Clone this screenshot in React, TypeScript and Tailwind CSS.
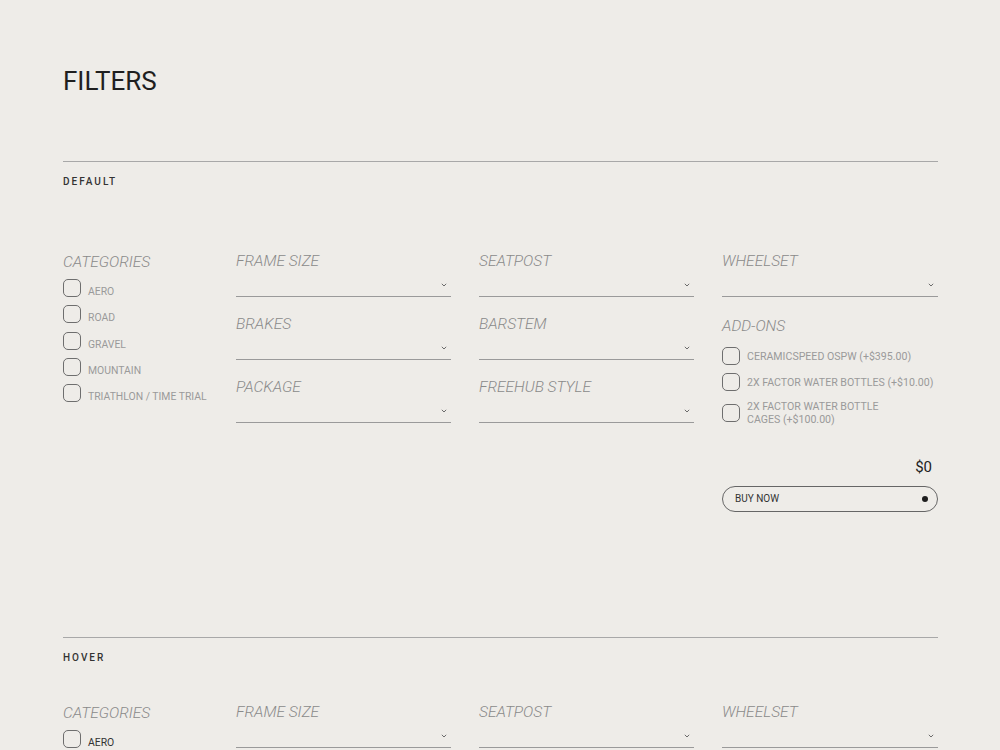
import React from "react"

const categories = ["AERO", "ROAD", "GRAVEL", "MOUNTAIN", "TRIATHLON / TIME TRIAL"]
const addOns: React.ReactNode[] = [
  "CERAMICSPEED OSPW (+$395.00)",
  "2X FACTOR WATER BOTTLES (+$10.00)",
  <>
    2X FACTOR WATER BOTTLE
    <br />
    CAGES (+$100.00)
  </>,
]

function Box() {
  return <span className="block w-[18px] h-[18px] shrink-0 rounded-[5px] border border-[#6e6e6e]" />
}

function Chevron() {
  return (
    <svg width="6" height="4" viewBox="0 0 6 4" fill="none" className="block">
      <path d="M0.8 0.8L3 3L5.2 0.8" stroke="#6b6b6b" strokeWidth="1" />
    </svg>
  )
}

function Label({ children }: { children: React.ReactNode }) {
  return <div className="h-5 text-[15.5px] leading-5 italic font-light text-[#8a8a8a]">{children}</div>
}

function Select({ label }: { label: string }) {
  return (
    <div>
      <Label>{label}</Label>
      <div className="h-[26px] border-b border-[#9a9a9a] flex items-center justify-end pr-[4px] pt-[2px]">
        <Chevron />
      </div>
    </div>
  )
}

function Filters({ hover = false }: { hover?: boolean }) {
  return (
    <div className="grid grid-cols-[145px_215px_215px_216px] gap-x-[28px]">
      {/* Categories */}
      <div className="pt-px">
        <Label>CATEGORIES</Label>
        <div className="mt-[7px] flex flex-col gap-[8.3px]">
          {categories.map((c, i) => (
            <label key={c} className="flex items-start gap-[7px] h-[18px]">
              <Box />
              <span
                className={
                  "text-[10.4px] leading-[13px] pt-[6px] whitespace-nowrap " +
                  (hover && i === 0 ? "text-[#333]" : "text-[#9a9a9a]")
                }
              >
                {c}
              </span>
            </label>
          ))}
        </div>
      </div>

      <div className="flex flex-col gap-[17px]">
        <Select label="FRAME SIZE" />
        <Select label="BRAKES" />
        <Select label="PACKAGE" />
      </div>

      <div className="flex flex-col gap-[17px]">
        <Select label="SEATPOST" />
        <Select label="BARSTEM" />
        <Select label="FREEHUB STYLE" />
      </div>

      <div className="flex flex-col">
        <Select label="WHEELSET" />
        <div className="mt-[19px]">
          <Label>ADD-ONS</Label>
        </div>
        <div className="mt-[11px] flex flex-col gap-2">
          {addOns.map((a, i) => (
            <label key={i} className="flex items-center gap-[7px]">
              <Box />
              <span className="text-[10.6px] leading-[13px] text-[#9a9a9a] pt-[1px] whitespace-nowrap">{a}</span>
            </label>
          ))}
        </div>
        <div className="mt-[31px] h-5 text-right pr-[6px] text-[15px] leading-5 text-[#222]">$0</div>
        <button className="mt-[9px] h-[26px] w-full rounded-full border border-[#666] flex items-center justify-between pl-[12px] pr-[9px]">
          <span className="text-[10px] text-[#333] leading-none">BUY NOW</span>
          <span className="w-[6px] h-[6px] rounded-full bg-[#1e1e1e]" />
        </button>
      </div>
    </div>
  )
}

export default function App() {
  return (
    <div className="h-[750px] bg-[#eeece8] font-['Roboto',sans-serif] overflow-hidden">
      <div className="ml-[63px] w-[875px] pt-[67px]">
        <h1 className="text-[26px] leading-[28px] text-[#1f1f1f]">FILTERS</h1>

        <section className="mt-[66px] border-t border-[#a8a8a8]">
          <div className="mt-[13px] text-[10px] leading-[14px] font-medium tracking-[0.2em] text-[#333]">DEFAULT</div>
          <div className="mt-[62px]">
            <Filters />
          </div>
        </section>

        <section className="mt-[125px] border-t border-[#a8a8a8]">
          <div className="mt-[13px] text-[10px] leading-[14px] font-medium tracking-[0.2em] text-[#333]">HOVER</div>
          <div className="mt-[37px]">
            <Filters hover />
          </div>
        </section>
      </div>
    </div>
  )
}
